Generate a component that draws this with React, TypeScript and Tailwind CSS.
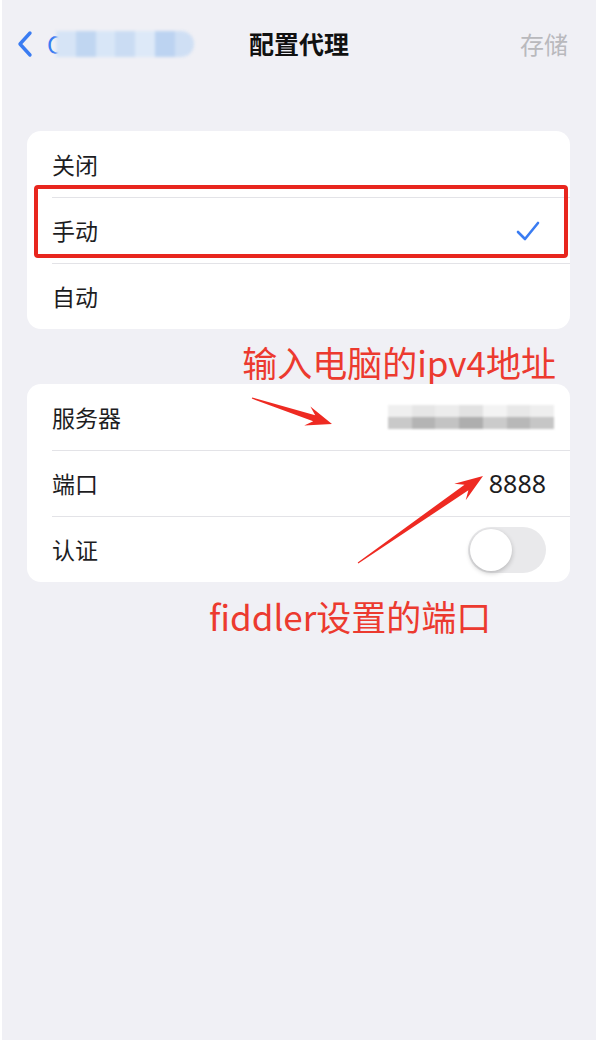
import React from "react";

const CJK = { fontFamily: '"Noto Sans CJK SC", "Noto Sans", sans-serif' };

type Pt = [number, number];

// tapered "screenshot tool" arrow, tail -> tip
function arrowPoints(tail: Pt, tip: Pt, headLen = 28, headW = 11, shaftW = 3.5) {
  const dx = tip[0] - tail[0];
  const dy = tip[1] - tail[1];
  const len = Math.hypot(dx, dy);
  const ux = dx / len;
  const uy = dy / len;
  const nx = -uy;
  const ny = ux;
  const at = (d: number, w: number): Pt => [
    tip[0] - ux * d + nx * w,
    tip[1] - uy * d + ny * w,
  ];
  const pts: Pt[] = [
    [tail[0] + nx * 0.6, tail[1] + ny * 0.6],
    at(headLen * 0.72, shaftW),
    at(headLen, headW),
    tip,
    at(headLen, -headW),
    at(headLen * 0.72, -shaftW),
    [tail[0] - nx * 0.6, tail[1] - ny * 0.6],
  ];
  return pts.map((p) => p.map((v) => v.toFixed(1)).join(",")).join(" ");
}

function Row({
  label,
  first,
  children,
}: {
  label: string;
  first?: boolean;
  children?: React.ReactNode;
}) {
  return (
    <div className="flex h-[66px] pl-[25px]">
      <div
        className={`flex flex-1 items-center justify-between pr-[24px] ${
          first ? "" : "border-t border-[#e3e3e7]"
        }`}
      >
        <span className="text-[23px] text-[#1d1d1f]">{label}</span>
        {children}
      </div>
    </div>
  );
}

function Toggle() {
  return (
    <div className="flex h-[46px] w-[78px] items-center rounded-full bg-[#e9e9eb] p-[2px]">
      <div className="h-[42px] w-[42px] rounded-full bg-white shadow-[0_2px_5px_rgba(0,0,0,0.22)]" />
    </div>
  );
}

function BlurredName() {
  const shades = ["#d6e4f6", "#c0d6f1", "#d8e6f7", "#cadcf3", "#dde9f8", "#bcd3f1", "#cfdff4"];
  return (
    <div className="flex h-[26px] w-[138px] overflow-hidden rounded-r-full blur-[1.5px]">
      {shades.map((c, i) => (
        <div key={i} className="h-full flex-1" style={{ background: c }} />
      ))}
    </div>
  );
}

function BlurredAddress() {
  const top = ["#efefef", "#e6e6e6", "#ececec", "#e2e2e2", "#f3f3f3", "#e8e8e8", "#eeeeee"];
  const bottom = ["#c9c9c9", "#b4b4b4", "#c3c3c3", "#aeaeae", "#cbcbcb", "#b8b8b8", "#c6c6c6"];
  return (
    <div className="flex h-[24px] w-[166px] flex-col blur-[1px]">
      <div className="flex flex-1">
        {top.map((c, i) => (
          <div key={i} className="flex-1" style={{ background: c }} />
        ))}
      </div>
      <div className="flex flex-1">
        {bottom.map((c, i) => (
          <div key={i} className="flex-1" style={{ background: c }} />
        ))}
      </div>
    </div>
  );
}

export default function App() {
  return (
    <div className="relative flex h-[1040px] w-[600px] bg-white" style={CJK}>
      <div className="ml-[2px] mr-[4px] flex flex-1 flex-col bg-[#f0f0f5]">
        {/* nav bar */}
        <div className="grid h-[88px] grid-cols-[1fr_auto_1fr] items-center">
          <div className="flex items-center pl-[13px]">
            <svg width="20" height="28" viewBox="0 0 20 28" fill="none">
              <path
                d="M15 3 L5 14 L15 25"
                stroke="#3a7cf2"
                strokeWidth="3.4"
                strokeLinecap="round"
                strokeLinejoin="round"
              />
            </svg>
            <span className="ml-[12px] text-[24px] leading-none text-[#3a7cf2]">C</span>
            <div className="-ml-[6px]">
              <BlurredName />
            </div>
          </div>
          <div className="text-[25px] font-bold text-[#111]">配置代理</div>
          <div className="pr-[28px] text-right text-[24px] text-[#b9b9bd]">存储</div>
        </div>

        {/* proxy mode */}
        <div className="relative ml-[25px] mr-[26px] mt-[43px] rounded-[14px] bg-white">
          <Row label="关闭" first />
          <Row label="手动">
            <svg width="24" height="22" viewBox="0 0 24 22" fill="none" className="mr-[6px]">
              <path
                d="M2 12 L9 19 L22 3"
                stroke="#3a7cf2"
                strokeWidth="2.6"
                strokeLinecap="round"
                strokeLinejoin="round"
              />
            </svg>
          </Row>
          <Row label="自动" />
          <div className="pointer-events-none absolute left-[7px] right-[2px] top-[54px] h-[73px] rounded-[4px] border-[4px] border-[#e8261e]" />
        </div>

        <div className="mt-[15px] pr-[40px] text-right text-[35px] leading-[35px] text-[#ec3a2f]">
          输入电脑的ipv4地址
        </div>

        {/* server settings */}
        <div className="ml-[25px] mr-[26px] mt-[5px] rounded-[14px] bg-white">
          <Row label="服务器" first>
            <div className="-mr-[8px]">
              <BlurredAddress />
            </div>
          </Row>
          <Row label="端口">
            <span
              className="text-[25px] text-[#1d1d1f]"
              style={{ fontFamily: '"Noto Sans", sans-serif' }}
            >
              8888
            </span>
          </Row>
          <Row label="认证">
            <Toggle />
          </Row>
        </div>

        <div className="mt-[16px] pl-[207px] text-[35px] leading-[35px] text-[#ec3a2f]">
          fiddler设置的端口
        </div>
      </div>

      {/* callout arrows */}
      <svg
        className="pointer-events-none absolute left-0 top-0"
        width="600"
        height="1040"
        viewBox="0 0 600 1040"
      >
        <polygon points={arrowPoints([252, 398], [332, 424], 26, 10, 3.2)} fill="#ee2a22" />
        <polygon points={arrowPoints([358, 563], [483, 476], 28, 10, 3.4)} fill="#ee2a22" />
      </svg>
    </div>
  );
}
